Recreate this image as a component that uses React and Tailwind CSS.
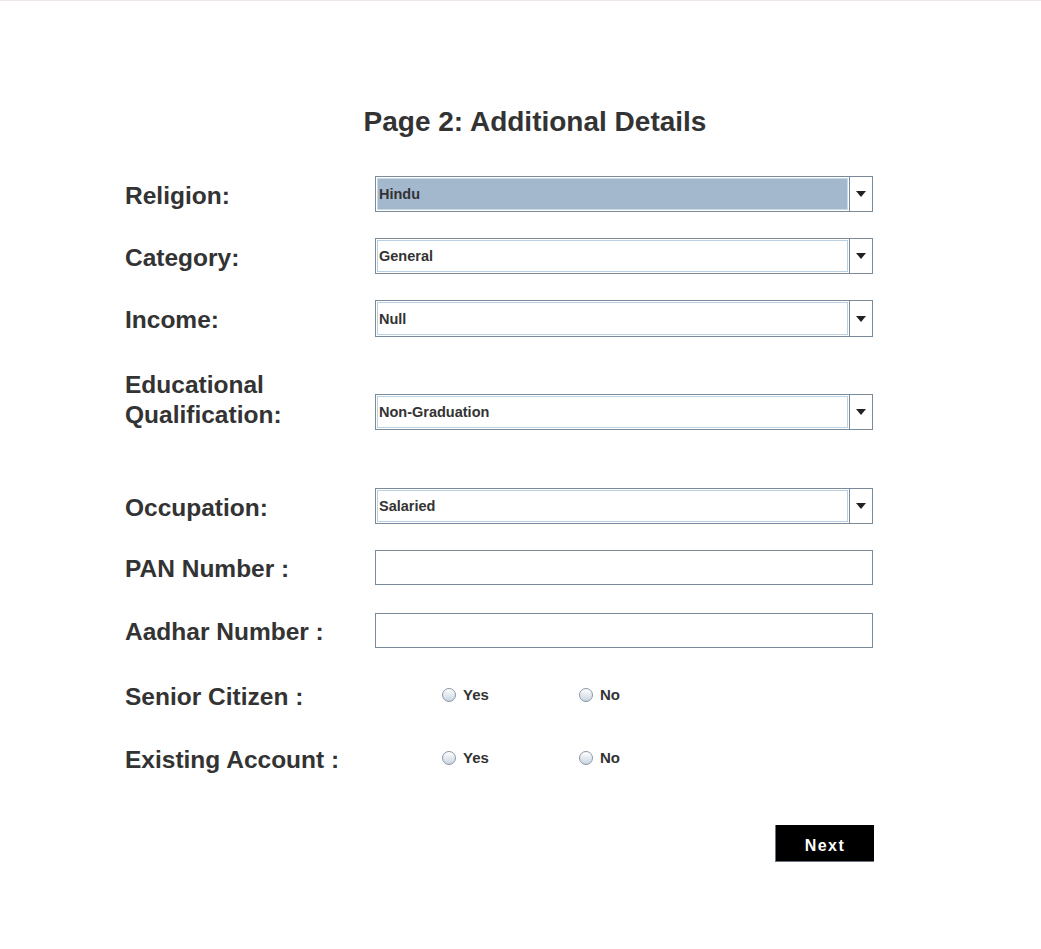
const FONT = { fontFamily: '"Liberation Sans", Arial, sans-serif' }

const LABEL = 'w-[250px] shrink-0 text-[24.5px] font-bold leading-[30px] text-[#333333]'

function Combo({ value, selected }) {
  return (
    <div className="flex h-full w-[498px] border border-[#7a8a99] bg-white">
      <div className="flex-1 p-[1px]">
        <div
          className={`flex h-full items-center border px-[2px] pt-[2px] text-[14.5px] font-bold text-[#333333] ${
            selected ? 'border-[#c9d8e6] bg-[#a3b8cc]' : 'border-[#bcd0e4] bg-white'
          }`}
        >
          <span className="-ml-[1px]">{value}</span>
        </div>
      </div>
      <div className="flex w-[23px] items-center justify-center border-l border-[#7a8a99]">
        <svg width="10" height="6" viewBox="0 0 10 6">
          <path d="M0 0h10L5 6z" fill="#222" />
        </svg>
      </div>
    </div>
  )
}

function TextField() {
  return <div className="h-full w-[498px] border border-[#7a8a99] bg-white" />
}

function Radio({ label }) {
  return (
    <div className="flex items-center gap-[7px]">
      <div className="h-[14px] w-[14px] rounded-full border border-[#8796a8] bg-gradient-to-b from-white to-[#c9d4e0]" />
      <span className="text-[15px] font-bold text-[#333333]">{label}</span>
    </div>
  )
}

function Row({ label, children, top, h = 36 }) {
  return (
    <div className="flex items-center" style={{ marginTop: top, height: h }}>
      <div className={`${LABEL} pt-[3px]`}>{label}</div>
      {children}
    </div>
  )
}

function RadioPair() {
  return (
    <div className="flex pl-[67px]">
      <div className="w-[137px]">
        <Radio label="Yes" />
      </div>
      <Radio label="No" />
    </div>
  )
}

export default function App() {
  return (
    <div className="min-h-[949px] w-[1041px] border-t border-[#efe6e6] bg-white" style={FONT}>
      <div className="pl-[125px]">
        <h1 className="mt-[106px] w-[820px] text-center text-[28px] font-bold leading-[30px] text-[#333333]">
          Page 2: Additional Details
        </h1>

        <Row label="Religion:" top={39}>
          <Combo value="Hindu" selected />
        </Row>
        <Row label="Category:" top={26}>
          <Combo value="General" />
        </Row>
        <Row label="Income:" top={26} h={37}>
          <Combo value="Null" />
        </Row>

        <div className="mt-[31px] flex items-start">
          <div className={`${LABEL} pt-[2px]`}>
            Educational
            <br />
            Qualification:
          </div>
          <div className="mt-[26px] h-[36px]">
            <Combo value="Non-Graduation" />
          </div>
        </div>

        <Row label="Occupation:" top={58}>
          <Combo value="Salaried" />
        </Row>
        <Row label="PAN Number :" top={26} h={35}>
          <TextField />
        </Row>
        <Row label="Aadhar Number :" top={28} h={35}>
          <TextField />
        </Row>

        <Row label="Senior Citizen :" top={29}>
          <RadioPair />
        </Row>
        <Row label="Existing Account :" top={27}>
          <RadioPair />
        </Row>

        <div className="mt-[49px] flex w-[749px] justify-end">
          <button className="flex h-[37px] w-[99px] items-center justify-center border-b border-l border-[#6b7480] bg-black pt-[5px] text-[16px] font-bold tracking-[1.5px] text-white">
            Next
          </button>
        </div>
      </div>
    </div>
  )
}
